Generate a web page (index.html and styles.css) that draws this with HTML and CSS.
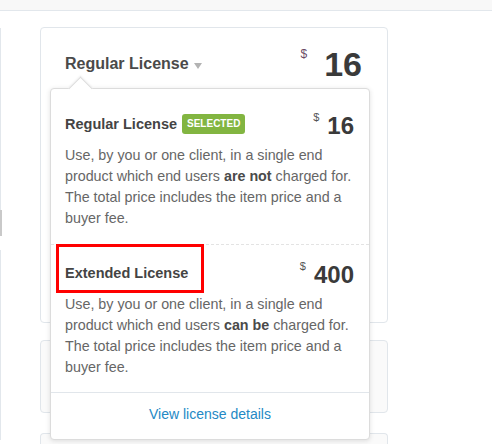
FILE: index.html
```html
<!DOCTYPE html>
<html>
<head>
<meta charset="utf-8">
<link rel="stylesheet" href="styles.css">
</head>
<body>
<div class="topbar"></div>
<div class="layout">
  <div class="leftcol">
    <div class="lc-line lc-top"></div>
    <div class="lc-block"></div>
    <div class="lc-gap"></div>
    <div class="lc-line lc-rest"></div>
  </div>
  <div class="rightcol">
    <div class="card card-main">
      <div class="hdr">
        <div class="hdr-title">Regular License <span class="caret"></span></div>
        <div class="hdr-price"><span class="cur">$</span><span class="amt">16</span></div>
      </div>
      <div class="popover">
        <div class="pop-arrow"></div>
        <div class="opt opt-first">
          <div class="opt-head">
            <div class="opt-name">Regular License <span class="badge">SELECTED</span></div>
            <div class="opt-price"><span class="cur">$</span><span class="amt">16</span></div>
          </div>
          <p class="opt-desc">Use, by you or one client, in a single end product which end users <b>are not</b> charged for. The total price includes the item price and a buyer fee.</p>
        </div>
        <div class="opt opt-second">
          <div class="opt-head">
            <div class="opt-name">Extended License</div>
            <div class="opt-price"><span class="cur">$</span><span class="amt">400</span></div>
          </div>
          <p class="opt-desc">Use, by you or one client, in a single end product which end users <b>can be</b> charged for. The total price includes the item price and a buyer fee.</p>
        </div>
        <div class="pop-foot"><a class="pop-link" href="#">View license details</a></div>
        <div class="highlight"></div>
      </div>
    </div>
    <div class="card card-soft"></div>
    <div class="card card-soft card-last"></div>
  </div>
</div>
</body>
</html>
```
FILE: styles.css
```css
* { box-sizing: border-box; }
html, body { margin: 0; padding: 0; }
body {
  width: 492px;
  height: 444px;
  overflow: hidden;
  background: #fff;
  font-family: "Liberation Sans", Arial, sans-serif;
  color: #444;
}
.topbar {
  height: 11px;
  background: #f8f8f8;
  border-bottom: 1px solid #e2e7ec;
}
.layout {
  display: flex;
  padding-top: 16px;
}
.leftcol {
  width: 2px;
  display: flex;
  flex-direction: column;
  padding-top: 1px;
}
.lc-line { width: 1px; background: #e2e7ec; }
.lc-top { height: 182px; }
.lc-block { height: 26px; width: 2px; background: #c9c9c9; }
.lc-gap { height: 14px; }
.lc-rest { height: 190px; }
.rightcol {
  margin-left: 38px;
  width: 348px;
  display: flex;
  flex-direction: column;
}
.card {
  border: 1px solid #e1e6eb;
  border-radius: 4px;
  background: #fff;
}
.card-main {
  position: relative;
  height: 296px;
  padding: 0 25px 0 24px;
}
.card-soft {
  margin-top: 17px;
  height: 73px;
  background: #fafafa;
}
.card-last {
  margin-top: 20px;
  height: 11px;
  border-bottom: none;
  border-radius: 4px 4px 0 0;
}
.hdr {
  display: flex;
  justify-content: space-between;
  align-items: flex-end;
  padding-top: 19px;
}
.hdr-title {
  display: flex;
  align-items: center;
  font-size: 16px;
  line-height: 20px;
  font-weight: bold;
  color: #4a4a4a;
  margin-bottom: 7px;
}
.caret {
  display: inline-block;
  width: 0;
  height: 0;
  margin-left: 5px;
  margin-top: 3px;
  border-left: 4.5px solid transparent;
  border-right: 4.5px solid transparent;
  border-top: 6px solid #b3b3b3;
}
.hdr-price {
  display: flex;
  align-items: flex-start;
}
.hdr-price .cur {
  font-size: 12px;
  line-height: 12px;
  margin-top: 1px;
  margin-right: 17px;
  color: #6a4a66;
}
.hdr-price .amt {
  font-size: 34px;
  line-height: 34px;
  font-weight: bold;
  color: #3a3a3a;
}
.popover {
  position: absolute;
  left: 9px;
  top: 60px;
  width: 320px;
  background: #fff;
  border: 1px solid #dcdcdc;
  border-radius: 4px;
  box-shadow: 0 1px 5px rgba(0,0,0,0.12);
}
.pop-arrow {
  position: absolute;
  left: 20.5px;
  top: -9.5px;
  width: 17px;
  height: 17px;
  background: #fff;
  border-top: 1px solid #dcdcdc;
  border-left: 1px solid #dcdcdc;
  transform: rotate(45deg);
  box-shadow: -1px -1px 2px rgba(0,0,0,0.05);
}
.opt {
  position: relative;
  padding: 25px 15px 15px 14px;
}
.opt-first { border-bottom: 1px dashed #e3e3e3; }
.opt-second { padding-top: 18px; padding-bottom: 14px; }
.opt-head {
  display: flex;
  justify-content: space-between;
  align-items: flex-start;
}
.opt-name {
  display: flex;
  align-items: center;
  height: 20px;
  font-size: 14.5px;
  line-height: 20px;
  font-weight: bold;
  color: #444;
}
.badge {
  display: inline-block;
  margin-left: 5px;
  height: 20px;
  padding: 0 5px;
  border-radius: 3px;
  background: #82b541;
  color: #fff;
  font-size: 10px;
  line-height: 20px;
  font-weight: bold;
}
.opt-price {
  display: flex;
  align-items: flex-start;
}
.opt-price .cur {
  font-size: 11px;
  line-height: 11px;
  margin-top: -2px;
  margin-right: 8px;
  color: #555;
}
.opt-price .amt {
  font-size: 24px;
  line-height: 24px;
  font-weight: bold;
  color: #3a3a3a;
}
.opt-desc {
  margin: 7px 0 0;
  font-size: 14.3px;
  line-height: 21px;
  color: #666;
}
.opt-desc b { color: #4a4a4a; }
.pop-foot {
  border-top: 1px solid #e1e6eb;
  padding: 11px 0 15px;
  text-align: center;
  line-height: 20px;
}
.pop-link {
  font-size: 14px;
  color: #2489c5;
  text-decoration: none;
}
.highlight {
  position: absolute;
  left: 5px;
  top: 155px;
  width: 148px;
  height: 49px;
  border: 3px solid #f00;
}
```
